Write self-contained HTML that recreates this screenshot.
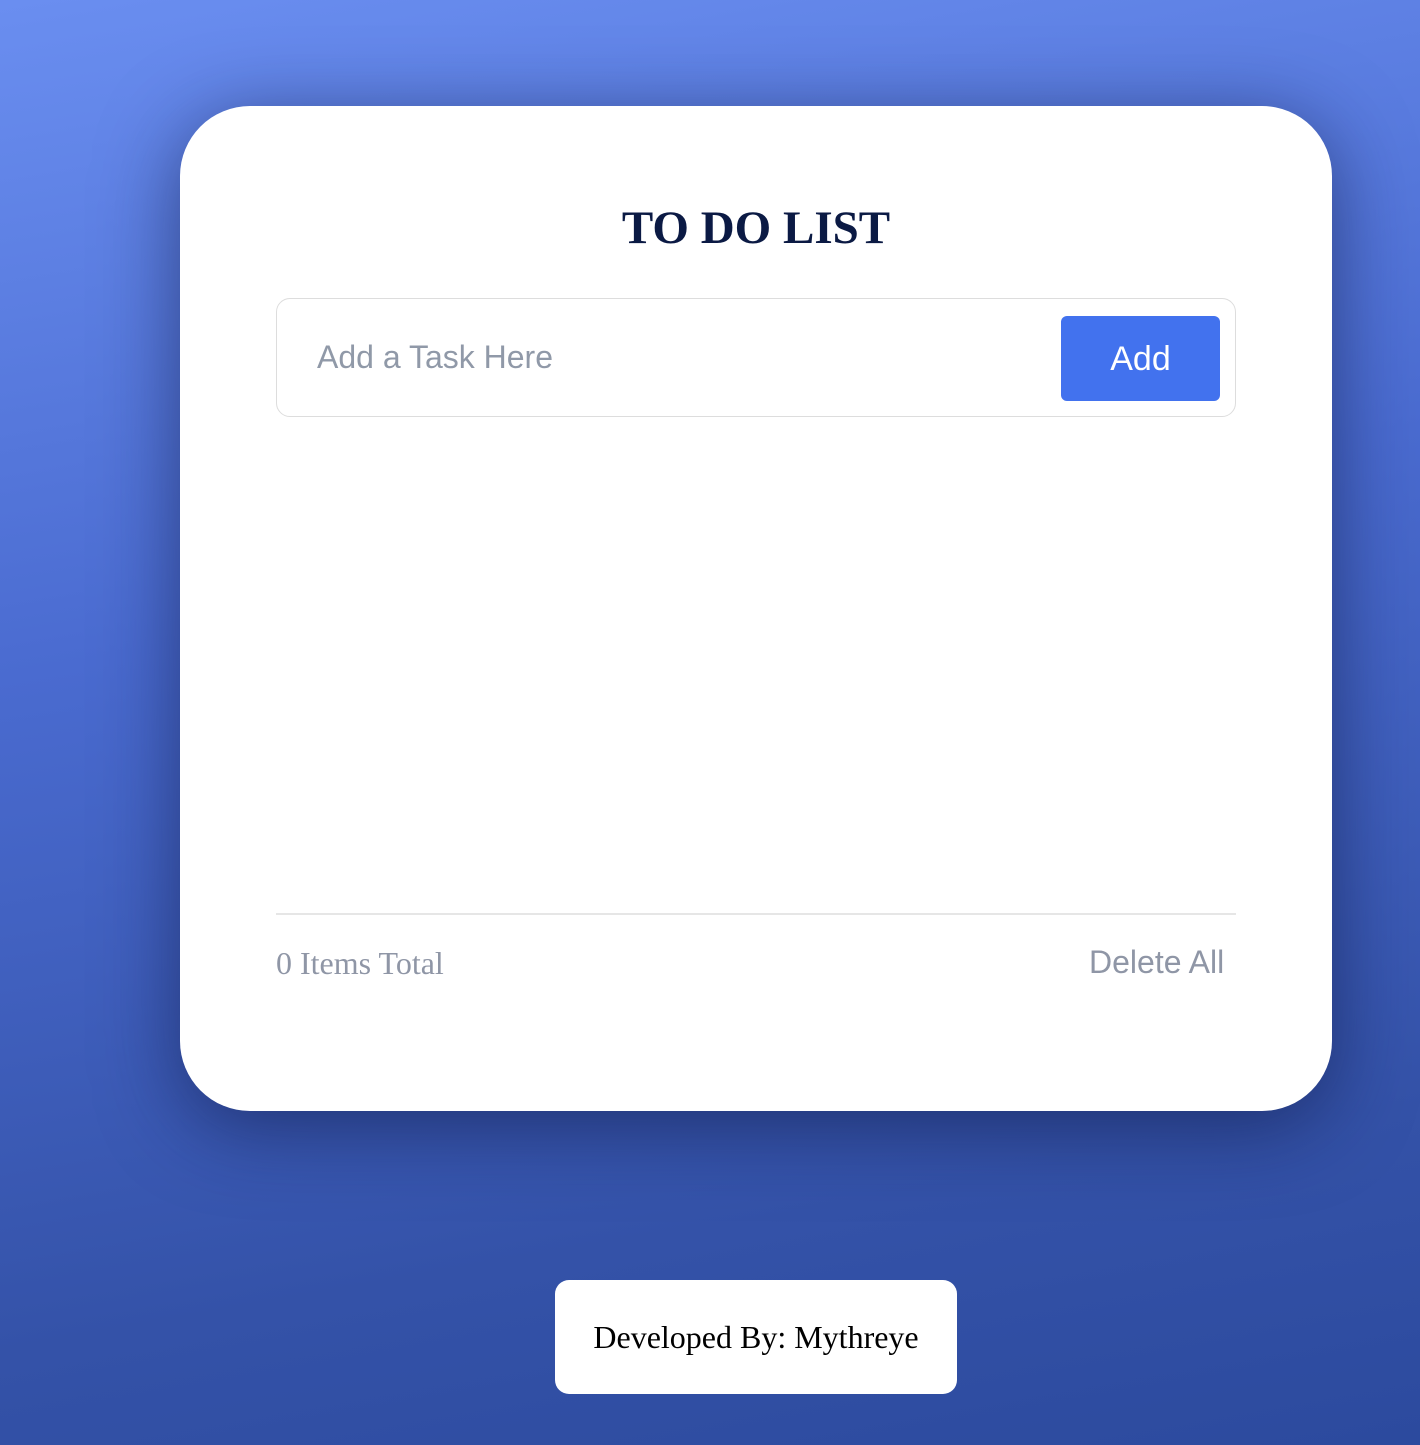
<!DOCTYPE html>
<html><head><style>
html,body{margin:0;padding:0;width:1420px;height:1445px;overflow:hidden}
body{background:linear-gradient(170deg,#6a8ef0 0%,#4a6bd0 40%,#3452a8 80%,#2c4a9e 100%);position:relative;font-family:"Liberation Serif",serif}
.card{position:absolute;left:180px;top:106px;width:1152px;height:1005px;background:#fff;border-radius:70px;box-shadow:0 15px 80px rgba(15,25,70,.6)}
h1{position:absolute;left:180px;width:1152px;top:201px;margin:0;text-align:center;font-size:47px;color:#0b1a44;font-weight:bold}
.inp{position:absolute;left:276px;top:298px;width:960px;height:119px;border:1px solid #ddd;border-radius:14px;box-sizing:border-box}
.ph{position:absolute;left:317px;top:339px;font-family:"Liberation Sans",sans-serif;font-size:32px;color:#9099a8}
.btn{position:absolute;left:1061px;top:316px;width:159px;height:85px;background:#4272ee;border-radius:6px;color:#fff;font-family:"Liberation Sans",sans-serif;font-size:34px;text-align:center;line-height:87px}
.line{position:absolute;left:276px;top:913px;width:960px;height:2px;background:#e6e6e6}
.cnt{position:absolute;left:276px;top:945px;font-size:32px;color:#8f96a6}
.del{position:absolute;left:1089px;top:944px;font-family:"Liberation Sans",sans-serif;font-size:32px;color:#8f96a6}
.foot{position:absolute;left:555px;top:1280px;width:402px;height:114px;background:#fff;border-radius:14px;text-align:center;line-height:114px;font-size:32px;color:#000}
</style></head><body>
<div class="card"></div>
<h1>TO DO LIST</h1>
<div class="inp"></div>
<div class="ph">Add a Task Here</div>
<div class="btn">Add</div>
<div class="line"></div>
<div class="cnt">0 Items Total</div>
<div class="del">Delete All</div>
<div class="foot">Developed By: Mythreye</div>
</body></html>
